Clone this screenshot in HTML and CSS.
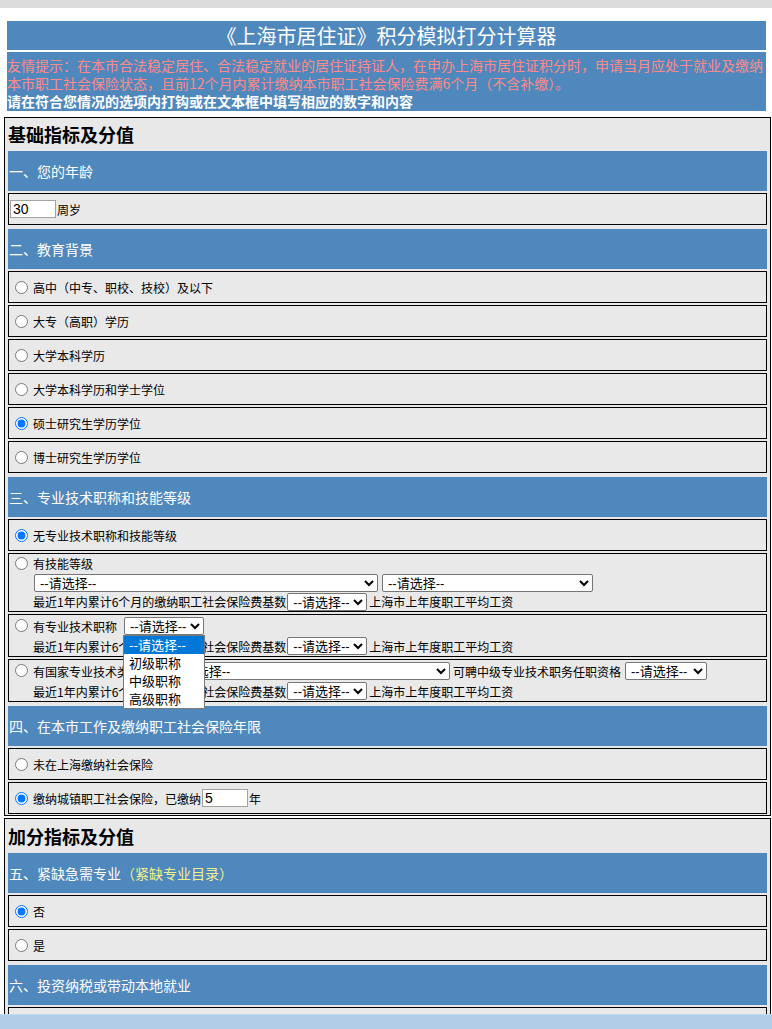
FILE: index.html
```html
<!DOCTYPE html>
<html lang="zh-CN">
<head>
<meta charset="utf-8">
<title>《上海市居住证》积分模拟打分计算器</title>
<link rel="stylesheet" href="styles.css">
</head>
<body>
<div class="topstrip"></div>
<div class="titlebar">《上海市居住证》积分模拟打分计算器</div>
<div class="notice">
  <span class="warn">友情提示：在本市合法稳定居住、合法稳定就业的居住证持证人，在申办上海市居住证积分时，申请当月应处于就业及缴纳本市职工社会保险状态，且前12个月内累计缴纳本市职工社会保险费满6个月（不含补缴）。</span><br>
  <span class="tip">请在符合您情况的选项内打钩或在文本框中填写相应的数字和内容</span>
</div>

<div class="panel">
  <h2 class="phead">基础指标及分值</h2>

  <div class="sec">一、您的年龄</div>
  <div class="row"><input class="num" type="text" value="30"><span class="unit">周岁</span></div>

  <div class="sec">二、教育背景</div>
  <label class="row"><input class="rd" type="radio" name="edu">高中（中专、职校、技校）及以下</label>
  <label class="row"><input class="rd" type="radio" name="edu">大专（高职）学历</label>
  <label class="row"><input class="rd" type="radio" name="edu">大学本科学历</label>
  <label class="row"><input class="rd" type="radio" name="edu">大学本科学历和学士学位</label>
  <label class="row"><input class="rd" type="radio" name="edu" checked>硕士研究生学历学位</label>
  <label class="row"><input class="rd" type="radio" name="edu">博士研究生学历学位</label>

  <div class="sec">三、专业技术职称和技能等级</div>
  <label class="row"><input class="rd" type="radio" name="title" checked>无专业技术职称和技能等级</label>
  <div class="row multi">
    <input class="rd" type="radio" name="title">
    <div class="col">
      <div class="ln">有技能等级</div>
      <div class="ln"><select class="sel w344"><option>--请选择--</option></select><select class="sel w211 gap4"><option>--请选择--</option></select></div>
      <div class="ln">最近1年内累计6个月的缴纳职工社会保险费基数<select class="sel w80 gap1"><option>--请选择--</option></select><span class="after">上海市上年度职工平均工资</span></div>
    </div>
  </div>
  <div class="row multi two">
    <input class="rd" type="radio" name="title">
    <div class="col">
      <div class="ln">有专业技术职称<span class="ddwrap"><select class="sel w80"><option>--请选择--</option></select>
        <span class="dd">
          <span class="opt on">--请选择--</span>
          <span class="opt">初级职称</span>
          <span class="opt">中级职称</span>
          <span class="opt">高级职称</span>
        </span></span></div>
      <div class="ln">最近1年内累计6个月的缴纳职工社会保险费基数<select class="sel w80 gap1"><option>--请选择--</option></select><span class="after">上海市上年度职工平均工资</span></div>
    </div>
  </div>
  <div class="row multi two">
    <input class="rd" type="radio" name="title">
    <div class="col">
      <div class="ln">有国家专业技术类资格证<select class="sel w282 gap3"><option>--请选择--</option></select><span class="mid">可聘中级专业技术职务任职资格</span><select class="sel w82"><option>--请选择--</option></select></div>
      <div class="ln">最近1年内累计6个月的缴纳职工社会保险费基数<select class="sel w80 gap1"><option>--请选择--</option></select><span class="after">上海市上年度职工平均工资</span></div>
    </div>
  </div>

  <div class="sec">四、在本市工作及缴纳职工社会保险年限</div>
  <label class="row"><input class="rd" type="radio" name="ins">未在上海缴纳社会保险</label>
  <div class="row"><input class="rd" type="radio" name="ins" checked>缴纳城镇职工社会保险，已缴纳<input class="num gapl" type="text" value="5"><span class="unit">年</span></div>
</div>

<div class="panel second">
  <h2 class="phead">加分指标及分值</h2>

  <div class="sec">五、紧缺急需专业<span class="yel">（紧缺专业目录）</span></div>
  <label class="row"><input class="rd" type="radio" name="need" checked>否</label>
  <label class="row"><input class="rd" type="radio" name="need">是</label>

  <div class="sec">六、投资纳税或带动本地就业</div>
  <label class="row"><input class="rd" type="radio" name="inv" checked>否</label>
</div>

<div class="bottombar"></div>
</body>
</html>
```

FILE: styles.css
```css
html {
  overflow: hidden;
}

body {
  margin: 0;
  background: #ffffff;
  font-family: "Noto Sans CJK SC", "Noto Sans", sans-serif;
  color: #000;
}

.topstrip {
  height: 8px;
  background: #dcdcdc;
}

.titlebar {
  margin: 13px 6px 0 7px;
  height: 29px;
  line-height: 29px;
  background: #4f88bc;
  color: #ffffff;
  font-size: 20px;
  text-align: center;
  white-space: nowrap;
}

.notice {
  margin: 2px 6px 0 7px;
  height: 59px;
  box-sizing: border-box;
  padding-top: 4px;
  background: #4f88bc;
  font-size: 14px;
  line-height: 18px;
}

.notice .warn {
  color: #ff8a8a;
}

.notice .tip {
  color: #ffffff;
  font-weight: bold;
}

.panel {
  margin: 6px 0 0 4px;
  width: 767px;
  box-sizing: border-box;
  border: 1px solid #000;
  background: #e8e8e8;
  padding: 0 3px 1px 3px;
}

.panel.second {
  margin-top: 2px;
}

.phead {
  margin: 0;
  height: 33px;
  line-height: 33px;
  font-size: 18px;
  font-weight: bold;
  color: #000;
  white-space: nowrap;
}

.panel.second .phead {
  height: 34px;
  line-height: 34px;
}

.sec {
  margin-top: 4px;
  height: 40px;
  line-height: 40px;
  background: #4f88bc;
  color: #ffffff;
  font-size: 14px;
  padding-left: 1px;
  white-space: nowrap;
}

.phead + .sec {
  margin-top: 0;
}

.yel {
  color: #f2f28a;
}

.row {
  margin-top: 2px;
  min-height: 32px;
  box-sizing: border-box;
  border: 1px solid #000;
  background: #e9e9e9;
  display: flex;
  align-items: center;
  padding: 0 1px;
  font-size: 12px;
  color: #000;
  white-space: nowrap;
}

.row.multi {
  align-items: flex-start;
}

.row.two {
  padding-top: 1px;
}

.rd {
  flex: none;
  width: 13px;
  height: 13px;
  margin: 0 5px;
}

.row.multi .rd {
  margin-top: 3px;
}

.col {
  display: flex;
  flex-direction: column;
}

.ln {
  height: 19px;
  display: flex;
  align-items: center;
  white-space: nowrap;
}

.row.two .ln {
  height: 20px;
}

.sel {
  height: 18px;
  box-sizing: border-box;
  margin: 0;
  padding: 0 0 0 1px;
  font-family: "Liberation Sans", "Noto Sans CJK SC", sans-serif;
  font-size: 13px;
  line-height: 16px;
  color: #000;
  background: #ffffff;
  border: 1px solid #767676;
  border-radius: 2px;
}

.w344 { width: 344px; margin-left: 1px; }
.w211 { width: 211px; }
.w80 { width: 80px; }
.w82 { width: 82px; margin-left: 4px; }
.w282 { width: 282px; }

.gap4 { margin-left: 4px; }
.gap3 { margin-left: 3px; }
.gap1 { margin-left: 1px; }

.after {
  margin-left: 2px;
}

.mid {
  margin-left: 3px;
}

.ddwrap {
  position: relative;
  display: inline-flex;
  margin-left: 7px;
}

.dd {
  position: absolute;
  left: -1px;
  top: 18px;
  width: 82px;
  box-sizing: border-box;
  border: 1px solid #7a7a7a;
  background: #ffffff;
  z-index: 5;
  display: flex;
  flex-direction: column;
}

.opt {
  height: 18px;
  line-height: 18px;
  padding-left: 5px;
  font-size: 13px;
  color: #000;
}

.opt.on {
  background: #0078d7;
  color: #ffffff;
}

.num {
  width: 46px;
  height: 18px;
  box-sizing: border-box;
  margin: 0;
  padding: 0 2px;
  border: 1px solid #a3a3a3;
  background: #ffffff;
  font-family: "Liberation Sans", "Noto Sans CJK SC", sans-serif;
  font-size: 14px;
  color: #000;
}

.num.gapl {
  margin-left: 1px;
}

.unit {
  margin-left: 1px;
}

.bottombar {
  position: fixed;
  left: 0;
  right: 0;
  bottom: 0;
  height: 14px;
  background: #b1cde8;
  border-top: 1px solid #c4dbef;
}
```
